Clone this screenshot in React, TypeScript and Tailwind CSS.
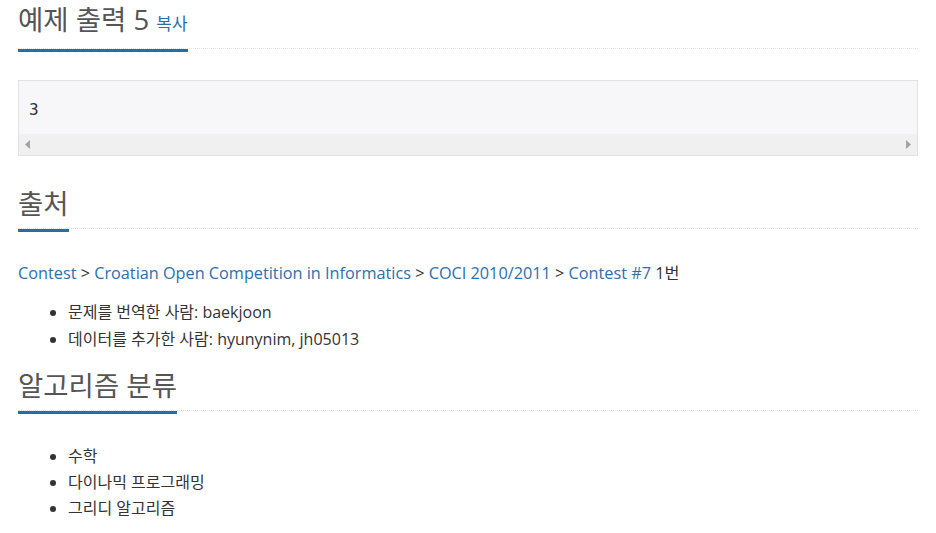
import React from "react";

const font = { fontFamily: '"Open Sans", "Noto Sans CJK KR", sans-serif' };

function Headline({ children }: { children: React.ReactNode }) {
  return (
    <div className="flex border-b border-dotted border-[#e2e2e2]">
      <h2 className="-mb-[4px] border-b-[3px] border-[#1f6fab] pb-[9px] text-[27.5px] leading-[32px] font-normal text-[#555]">
        {children}
      </h2>
    </div>
  );
}

export default function App() {
  return (
    <div className="w-[936px] h-[533px] overflow-hidden bg-white pl-[18px] pr-[18px] pt-[4px] text-[16.25px] text-[#333]" style={font}>
      <Headline>
        예제 출력 5 <a className="text-[17px] text-[#2a70ae]">복사</a>
      </Headline>

      <div className="mt-[31px] border border-[#e1e1e8] bg-[#f7f7f9]">
        <pre className="px-[10px] pt-[14px] pb-[9px] text-[16px] leading-[30px] text-[#333]" style={{ fontFamily: '"DejaVu Sans Mono", monospace' }}>3</pre>
        <div className="flex h-[21px] items-center justify-between bg-[#f0f0f0] px-[6px]">
          <svg width="5" height="9" viewBox="0 0 5 9"><path d="M5 0 L0 4.5 L5 9 Z" fill="#a3a3a3" /></svg>
          <svg width="5" height="9" viewBox="0 0 5 9"><path d="M0 0 L5 4.5 L0 9 Z" fill="#a3a3a3" /></svg>
        </div>
      </div>

      <div className="mt-[32px]">
        <Headline>출처</Headline>
      </div>

      <p className="mt-[32px] leading-[24px]">
        <a className="text-[#2a70ae]">Contest</a> &gt; <a className="text-[#2a70ae]">Croatian Open Competition in Informatics</a> &gt; <a className="text-[#2a70ae]">COCI 2010/2011</a> &gt; <a className="text-[#2a70ae]">Contest #7</a> 1번
      </p>

      <ul className="mt-[14px] list-disc pl-[50px] leading-[27px] text-[16px]">
        <li>문제를 번역한 사람: baekjoon</li>
        <li>데이터를 추가한 사람: hyunynim, jh05013</li>
      </ul>

      <div className="mt-[17px]">
        <Headline>알고리즘 분류</Headline>
      </div>

      <ul className="mt-[32px] list-disc pl-[50px] leading-[26px] text-[16px]">
        <li>수학</li>
        <li>다이나믹 프로그래밍</li>
        <li>그리디 알고리즘</li>
      </ul>
    </div>
  );
}
